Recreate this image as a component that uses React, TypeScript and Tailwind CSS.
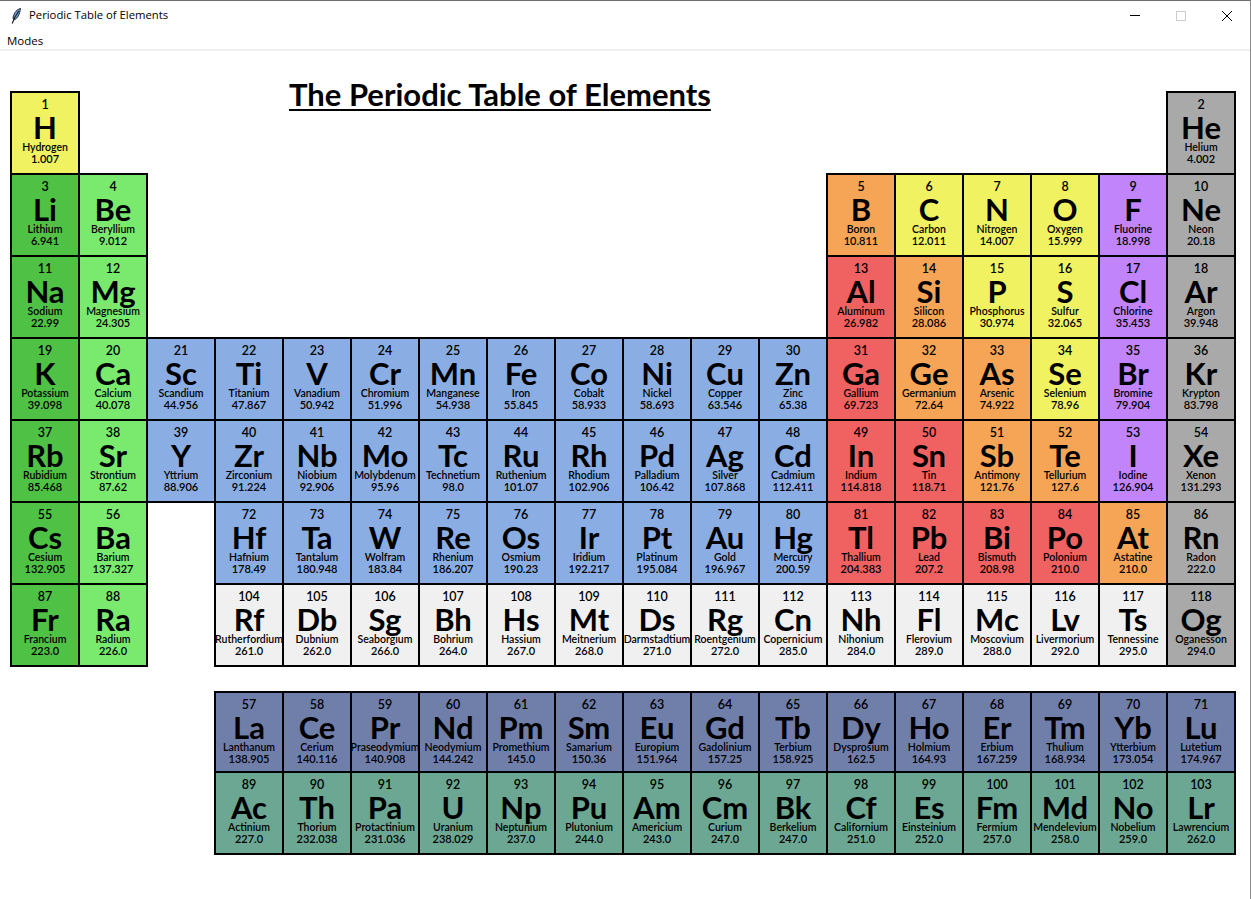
import React from 'react';

type Kind = 'alkali' | 'earth' | 'trans' | 'post' | 'metalloid' | 'nonmetal' | 'halogen' | 'noble' | 'unknown' | 'lan' | 'act';

const kindClasses: Record<Kind, string> = {
  alkali: 'bg-[#4fc245]',
  earth: 'bg-[#7aea6f]',
  trans: 'bg-[#8aade3]',
  post: 'bg-[#f06262]',
  metalloid: 'bg-[#f6a557]',
  nonmetal: 'bg-[#f1f261]',
  halogen: 'bg-[#c184fb]',
  noble: 'bg-[#a9a9a9]',
  unknown: 'bg-[#f0f0f0]',
  lan: 'bg-[#707eaa]',
  act: 'bg-[#6ba792]',
};

// number, symbol, name, mass, kind, column, row
type El = [number, string, string, string, Kind, number, number];

const elements: El[] = [
  [1, 'H', 'Hydrogen', '1.007', 'nonmetal', 1, 1],
  [2, 'He', 'Helium', '4.002', 'noble', 18, 1],
  [3, 'Li', 'Lithium', '6.941', 'alkali', 1, 2],
  [4, 'Be', 'Beryllium', '9.012', 'earth', 2, 2],
  [5, 'B', 'Boron', '10.811', 'metalloid', 13, 2],
  [6, 'C', 'Carbon', '12.011', 'nonmetal', 14, 2],
  [7, 'N', 'Nitrogen', '14.007', 'nonmetal', 15, 2],
  [8, 'O', 'Oxygen', '15.999', 'nonmetal', 16, 2],
  [9, 'F', 'Fluorine', '18.998', 'halogen', 17, 2],
  [10, 'Ne', 'Neon', '20.18', 'noble', 18, 2],
  [11, 'Na', 'Sodium', '22.99', 'alkali', 1, 3],
  [12, 'Mg', 'Magnesium', '24.305', 'earth', 2, 3],
  [13, 'Al', 'Aluminum', '26.982', 'post', 13, 3],
  [14, 'Si', 'Silicon', '28.086', 'metalloid', 14, 3],
  [15, 'P', 'Phosphorus', '30.974', 'nonmetal', 15, 3],
  [16, 'S', 'Sulfur', '32.065', 'nonmetal', 16, 3],
  [17, 'Cl', 'Chlorine', '35.453', 'halogen', 17, 3],
  [18, 'Ar', 'Argon', '39.948', 'noble', 18, 3],
  [19, 'K', 'Potassium', '39.098', 'alkali', 1, 4],
  [20, 'Ca', 'Calcium', '40.078', 'earth', 2, 4],
  [21, 'Sc', 'Scandium', '44.956', 'trans', 3, 4],
  [22, 'Ti', 'Titanium', '47.867', 'trans', 4, 4],
  [23, 'V', 'Vanadium', '50.942', 'trans', 5, 4],
  [24, 'Cr', 'Chromium', '51.996', 'trans', 6, 4],
  [25, 'Mn', 'Manganese', '54.938', 'trans', 7, 4],
  [26, 'Fe', 'Iron', '55.845', 'trans', 8, 4],
  [27, 'Co', 'Cobalt', '58.933', 'trans', 9, 4],
  [28, 'Ni', 'Nickel', '58.693', 'trans', 10, 4],
  [29, 'Cu', 'Copper', '63.546', 'trans', 11, 4],
  [30, 'Zn', 'Zinc', '65.38', 'trans', 12, 4],
  [31, 'Ga', 'Gallium', '69.723', 'post', 13, 4],
  [32, 'Ge', 'Germanium', '72.64', 'metalloid', 14, 4],
  [33, 'As', 'Arsenic', '74.922', 'metalloid', 15, 4],
  [34, 'Se', 'Selenium', '78.96', 'nonmetal', 16, 4],
  [35, 'Br', 'Bromine', '79.904', 'halogen', 17, 4],
  [36, 'Kr', 'Krypton', '83.798', 'noble', 18, 4],
  [37, 'Rb', 'Rubidium', '85.468', 'alkali', 1, 5],
  [38, 'Sr', 'Strontium', '87.62', 'earth', 2, 5],
  [39, 'Y', 'Yttrium', '88.906', 'trans', 3, 5],
  [40, 'Zr', 'Zirconium', '91.224', 'trans', 4, 5],
  [41, 'Nb', 'Niobium', '92.906', 'trans', 5, 5],
  [42, 'Mo', 'Molybdenum', '95.96', 'trans', 6, 5],
  [43, 'Tc', 'Technetium', '98.0', 'trans', 7, 5],
  [44, 'Ru', 'Ruthenium', '101.07', 'trans', 8, 5],
  [45, 'Rh', 'Rhodium', '102.906', 'trans', 9, 5],
  [46, 'Pd', 'Palladium', '106.42', 'trans', 10, 5],
  [47, 'Ag', 'Silver', '107.868', 'trans', 11, 5],
  [48, 'Cd', 'Cadmium', '112.411', 'trans', 12, 5],
  [49, 'In', 'Indium', '114.818', 'post', 13, 5],
  [50, 'Sn', 'Tin', '118.71', 'post', 14, 5],
  [51, 'Sb', 'Antimony', '121.76', 'metalloid', 15, 5],
  [52, 'Te', 'Tellurium', '127.6', 'metalloid', 16, 5],
  [53, 'I', 'Iodine', '126.904', 'halogen', 17, 5],
  [54, 'Xe', 'Xenon', '131.293', 'noble', 18, 5],
  [55, 'Cs', 'Cesium', '132.905', 'alkali', 1, 6],
  [56, 'Ba', 'Barium', '137.327', 'earth', 2, 6],
  [72, 'Hf', 'Hafnium', '178.49', 'trans', 4, 6],
  [73, 'Ta', 'Tantalum', '180.948', 'trans', 5, 6],
  [74, 'W', 'Wolfram', '183.84', 'trans', 6, 6],
  [75, 'Re', 'Rhenium', '186.207', 'trans', 7, 6],
  [76, 'Os', 'Osmium', '190.23', 'trans', 8, 6],
  [77, 'Ir', 'Iridium', '192.217', 'trans', 9, 6],
  [78, 'Pt', 'Platinum', '195.084', 'trans', 10, 6],
  [79, 'Au', 'Gold', '196.967', 'trans', 11, 6],
  [80, 'Hg', 'Mercury', '200.59', 'trans', 12, 6],
  [81, 'Tl', 'Thallium', '204.383', 'post', 13, 6],
  [82, 'Pb', 'Lead', '207.2', 'post', 14, 6],
  [83, 'Bi', 'Bismuth', '208.98', 'post', 15, 6],
  [84, 'Po', 'Polonium', '210.0', 'post', 16, 6],
  [85, 'At', 'Astatine', '210.0', 'metalloid', 17, 6],
  [86, 'Rn', 'Radon', '222.0', 'noble', 18, 6],
  [87, 'Fr', 'Francium', '223.0', 'alkali', 1, 7],
  [88, 'Ra', 'Radium', '226.0', 'earth', 2, 7],
  [104, 'Rf', 'Rutherfordium', '261.0', 'unknown', 4, 7],
  [105, 'Db', 'Dubnium', '262.0', 'unknown', 5, 7],
  [106, 'Sg', 'Seaborgium', '266.0', 'unknown', 6, 7],
  [107, 'Bh', 'Bohrium', '264.0', 'unknown', 7, 7],
  [108, 'Hs', 'Hassium', '267.0', 'unknown', 8, 7],
  [109, 'Mt', 'Meitnerium', '268.0', 'unknown', 9, 7],
  [110, 'Ds', 'Darmstadtium', '271.0', 'unknown', 10, 7],
  [111, 'Rg', 'Roentgenium', '272.0', 'unknown', 11, 7],
  [112, 'Cn', 'Copernicium', '285.0', 'unknown', 12, 7],
  [113, 'Nh', 'Nihonium', '284.0', 'unknown', 13, 7],
  [114, 'Fl', 'Flerovium', '289.0', 'unknown', 14, 7],
  [115, 'Mc', 'Moscovium', '288.0', 'unknown', 15, 7],
  [116, 'Lv', 'Livermorium', '292.0', 'unknown', 16, 7],
  [117, 'Ts', 'Tennessine', '295.0', 'unknown', 17, 7],
  [118, 'Og', 'Oganesson', '294.0', 'noble', 18, 7],
];

const lanthanides: [number, string, string, string][] = [
  [57, 'La', 'Lanthanum', '138.905'],
  [58, 'Ce', 'Cerium', '140.116'],
  [59, 'Pr', 'Praseodymium', '140.908'],
  [60, 'Nd', 'Neodymium', '144.242'],
  [61, 'Pm', 'Promethium', '145.0'],
  [62, 'Sm', 'Samarium', '150.36'],
  [63, 'Eu', 'Europium', '151.964'],
  [64, 'Gd', 'Gadolinium', '157.25'],
  [65, 'Tb', 'Terbium', '158.925'],
  [66, 'Dy', 'Dysprosium', '162.5'],
  [67, 'Ho', 'Holmium', '164.93'],
  [68, 'Er', 'Erbium', '167.259'],
  [69, 'Tm', 'Thulium', '168.934'],
  [70, 'Yb', 'Ytterbium', '173.054'],
  [71, 'Lu', 'Lutetium', '174.967'],
];

const actinides: [number, string, string, string][] = [
  [89, 'Ac', 'Actinium', '227.0'],
  [90, 'Th', 'Thorium', '232.038'],
  [91, 'Pa', 'Protactinium', '231.036'],
  [92, 'U', 'Uranium', '238.029'],
  [93, 'Np', 'Neptunium', '237.0'],
  [94, 'Pu', 'Plutonium', '244.0'],
  [95, 'Am', 'Americium', '243.0'],
  [96, 'Cm', 'Curium', '247.0'],
  [97, 'Bk', 'Berkelium', '247.0'],
  [98, 'Cf', 'Californium', '251.0'],
  [99, 'Es', 'Einsteinium', '252.0'],
  [100, 'Fm', 'Fermium', '257.0'],
  [101, 'Md', 'Mendelevium', '258.0'],
  [102, 'No', 'Nobelium', '259.0'],
  [103, 'Lr', 'Lawrencium', '262.0'],
];

const Cell: React.FC<{ num: number; sym: string; name: string; mass: string; kind: Kind; style?: React.CSSProperties; tall?: boolean }> = ({ num, sym, name, mass, kind, style, tall = true }) => (
  <div
    style={style}
    className={`w-[70px] ${tall ? 'h-[84px]' : 'h-[82px]'} border-2 border-black flex flex-col items-center pt-[6px] text-black whitespace-nowrap font-['Lato','Liberation_Sans',sans-serif] ${kindClasses[kind]}`}
  >
    <div className="text-[12.5px] leading-[12px] font-semibold">{num}</div>
    <div className="text-[31px] leading-[30px] font-bold mt-[1px]">{sym}</div>
    <div className="text-[10.5px] leading-[11px] font-semibold">{name}</div>
    <div className="text-[11px] leading-[12px] font-semibold">{mass}</div>
  </div>
);

const Feather = () => (
  <svg width="10" height="16" viewBox="0 0 10 16" fill="none">
    <path d="M9.5 0.5 C6.5 1 3 4.5 2.2 9 C2 10.8 2.4 11.8 3.4 11.6 C6.5 10.8 8.8 6 9.5 0.5 Z" fill="#6f9fd0" stroke="#10151f" strokeWidth="0.9" />
    <path d="M7.8 3 C5.5 6 3 10.5 1.2 15.5" stroke="#10151f" strokeWidth="1.1" />
  </svg>
);

export default function App() {
  return (
    <div className="w-[1251px] h-[899px] bg-white border-t border-t-[#6d6d6d] border-r border-r-[#8a8a8a] overflow-hidden">
      <div className="h-[29px] flex items-center pl-[11px] font-['Open_Sans','Liberation_Sans',sans-serif] text-[11.3px] text-black">
        <Feather />
        <span className="ml-[8px]">Periodic Table of Elements</span>
        <div className="ml-auto flex items-center">
          <div className="w-[46px] flex justify-center">
            <div className="w-[10px] h-px bg-black" />
          </div>
          <div className="w-[46px] flex justify-center">
            <div className="w-[10px] h-[10px] border border-[#cccccc]" />
          </div>
          <div className="w-[46px] flex justify-center">
            <svg width="12" height="12" viewBox="0 0 12 12" stroke="#000" strokeWidth="1" fill="none">
              <path d="M1 1 L11 11 M11 1 L1 11" />
            </svg>
          </div>
        </div>
      </div>
      <div className="h-[21px] border-b-2 border-b-[#f0f0f0] pl-[7px] pt-[1px] font-['Open_Sans','Liberation_Sans',sans-serif] text-[11.5px] leading-[20px] text-black">
        Modes
      </div>

      <div className="pt-[40px] pl-[10px]">
        <div className="grid grid-cols-[repeat(18,68px)] auto-rows-[82px]">
          <h1 className="col-start-5 col-end-12 row-start-1 self-start whitespace-nowrap pl-[7px] -mt-[15px] font-['Lato','Liberation_Sans',sans-serif] font-bold text-[31px] leading-[36px] text-black underline underline-offset-[3px] decoration-2">
            The Periodic Table of Elements
          </h1>
          {elements.map(([num, sym, name, mass, kind, col, row]) => (
            <Cell key={num} num={num} sym={sym} name={name} mass={mass} kind={kind} style={{ gridColumn: col, gridRow: row }} />
          ))}
        </div>

        <div className="ml-[204px] mt-[26px] grid grid-cols-[repeat(15,68px)] grid-rows-[80px_82px]">
          {lanthanides.map(([num, sym, name, mass]) => (
            <Cell key={num} num={num} sym={sym} name={name} mass={mass} kind="lan" tall={false} />
          ))}
          {actinides.map(([num, sym, name, mass]) => (
            <Cell key={num} num={num} sym={sym} name={name} mass={mass} kind="act" />
          ))}
        </div>
      </div>
    </div>
  );
}
